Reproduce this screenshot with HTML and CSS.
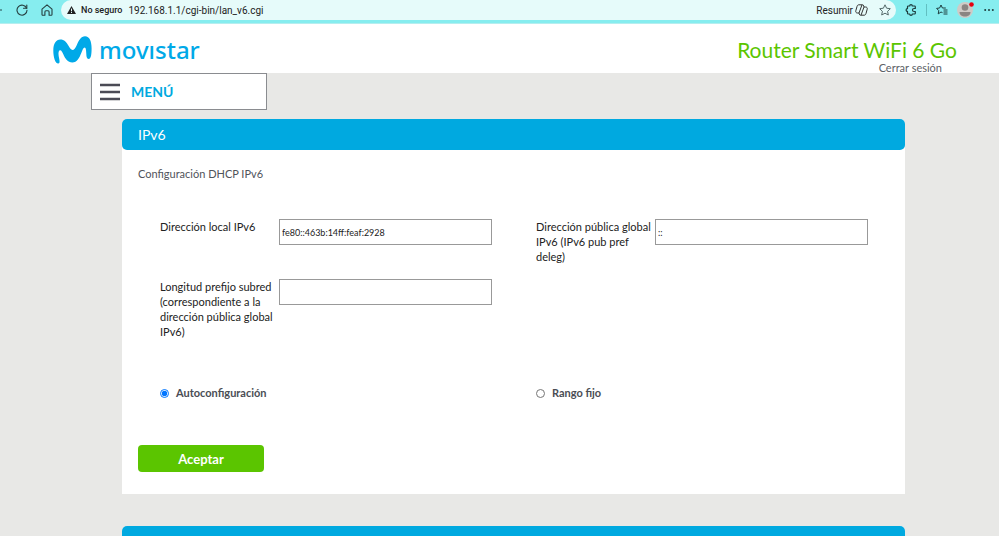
FILE: index.html
```html
<!DOCTYPE html>
<html lang="es">
<head>
  <meta charset="UTF-8">
  <meta name="viewport" content="width=device-width, initial-scale=1.0">
  <title>Router Smart WiFi 6 Go</title>
  <link rel="stylesheet" href="styles.css">
</head>
<body>
  <div class="browser-bar">
    <button class="bar-btn back-btn" aria-label="Atrás">
      <svg width="4" height="12" viewBox="0 0 4 12"><path d="M0 6h2" stroke="#25494a" fill="none"/></svg>
    </button>
    <button class="bar-btn reload-btn" aria-label="Actualizar">
      <svg width="12" height="12" viewBox="0 0 12 12" fill="none" stroke="#263f40" stroke-width="1.1" stroke-linecap="round"><path d="M10.6 4.2A5 5 0 1 0 11 6.2"/><path d="M10.8 1v3.3H7.5"/></svg>
    </button>
    <button class="bar-btn home-btn" aria-label="Inicio">
      <svg width="12" height="12" viewBox="0 0 12 12" fill="none" stroke="#263f40" stroke-width="1.1" stroke-linejoin="round"><path d="M1 5.2 6 .9l5 4.3v5.2c0 .5-.3.8-.8.8H8.100V8c0-.7-.4-1.200-1.100-1.200H5c-.7 0-1.100.5-1.100 1.200v3.200H1.800c-.5 0-.8-.3-.8-.8z"/></svg>
    </button>
    <div class="address">
      <svg width="9" height="8" viewBox="0 0 9 8"><path d="M4.500 0 9 8H0z" fill="#222"/><path d="M4.500 2.600v2.700M4.500 6v1" stroke="#e6fbfa"/></svg>
      <span class="insecure">No seguro</span>
      <span class="url">192.168.1.1/cgi-bin/lan_v6.cgi</span>
      <button class="bar-btn summary-btn">Resumir
        <svg width="13" height="12" viewBox="0 0 13 12" fill="none" stroke="#333" stroke-linejoin="round"><path d="M4 9H2.500C1 9 .5 8 .8 6.800L2 2.500C2.400 1.200 3 .8 4 .8h3.500c.8 0 1 .5 1.200 1.200L9 3"/><path d="M9 3h1.500c1.500 0 2 1 1.700 2.200L11 9.500c-.4 1.300-1 1.700-2 1.700H5.500c-.8 0-1-.5-1.200-1.200L4 9"/><path d="M7 .8 4 9M9 3 6 11.200"/></svg>
      </button>
      <button class="bar-btn" aria-label="Favorito">
        <svg width="12" height="12" viewBox="0 0 12 12" fill="none" stroke="#55696a" stroke-linejoin="round"><path d="m6 .8 1.600 3.400 3.700.5-2.700 2.600.7 3.700L6 9.200 2.700 11l.7-3.700L.7 4.700l3.700-.5z"/></svg>
      </button>
    </div>
    <div class="bar-tools">
      <button class="bar-btn" aria-label="Extensiones">
        <svg width="12" height="12" viewBox="0 0 12 12" fill="none" stroke="#1d3c3d" stroke-width="1.200" stroke-linejoin="round"><path d="M3.300 2h1.400a1.300 1.300 0 0 1 2.600 0h2.200c.5 0 .8.3.8.8v1.700H9a1.500 1.500 0 0 0 0 3h1.300v1.700c0 .5-.3.8-.8.8H7.300a1.300 1.300 0 0 1-2.600 0H3.300c-.5 0-.8-.3-.8-.8V7.400a1.400 1.400 0 0 1 0-2.800V2.800c0-.5.3-.8.8-.8z"/></svg>
      </button>
      <span class="separator"></span>
      <button class="bar-btn" aria-label="Favoritos">
        <svg width="12" height="12" viewBox="0 0 12 12" fill="none" stroke="#1d3c3d" stroke-linejoin="round"><path d="M6.500 8.600 5 8 2.200 9.900l.6-3.200L.6 4.400l3-.4L5 1l1.400 3h3.400"/><path d="M7.500 6h4M7.500 8h4M7.500 10h4"/></svg>
      </button>
      <button class="bar-btn avatar" aria-label="Perfil">
        <svg width="18" height="20" viewBox="0 0 18 20"><circle cx="8" cy="10" r="8" fill="#cfcac6"/><circle cx="8" cy="7.500" r="3.300" fill="#8a8582"/><path d="M2.500 12h11c0 3-2.500 4.500-5.500 4.500S2.500 15 2.500 12z" fill="#8a8582"/><circle cx="14.500" cy="4.500" r="2.300" fill="#e8000f"/></svg>
      </button>
      <button class="bar-btn" aria-label="Más">
        <svg width="10" height="4" viewBox="0 0 10 4" fill="#1d3c3d"><circle cx="1.200" cy="2" r="1"/><circle cx="5" cy="2" r="1"/><circle cx="8.800" cy="2" r="1"/></svg>
      </button>
    </div>
  </div>

  <header class="header">
    <a class="logo" href="#" aria-label="movistar">
      <svg width="39" height="28" viewBox="0 0 39 28"><path d="M5.200 27.600C2.200 27.600.3 21 .3 14.500.3 7.500 3 3.500 7.300 3.500c4 0 6.200 2.600 8.200 6.300 1.500 2.700 2.500 4.100 4 4.100 1.600 0 2.800-1.700 4.200-4.700C25.800 4.500 28 .3 32 .3c4.700 0 6.600 5.500 6.600 12 0 5.500-.5 10.700-2.900 10.700-2 0-2.300-2.600-2.400-5.200-.1-3.300-.4-6.300-1.700-6.300-1.300 0-2 2.300-3.200 5.300-2 5-4.300 9.700-9.100 9.700-4.700 0-7-3.700-9-8.200-1-2.300-1.900-4-3.100-4-1.500 0-1.900 2-1.600 5 .4 3.600 2.200 8.300-.4 8.300z" fill="#00a9e8"/></svg>
      <span class="logo-text">movıstar</span>
    </a>
    <div class="header-right">
      <h1 class="model">Router Smart WiFi 6 Go</h1>
      <a class="logout" href="#">Cerrar sesión</a>
    </div>
  </header>

  <button class="menu-btn">
    <svg width="20" height="18" viewBox="0 0 20 18"><path d="M0 2h20M0 9h20M0 16h20" stroke="#4b4b55" stroke-width="2.500"/></svg>
    MENÚ
  </button>

  <main class="content">
    <section class="panel">
      <h2 class="panel-title">IPv6</h2>
      <form class="panel-body">
        <p class="subtitle">Configuración DHCP IPv6</p>
        <div class="fields">
          <div class="field">
            <label for="local">Dirección local IPv6</label>
            <input type="text" id="local" value="fe80::463b:14ff:feaf:2928">
          </div>
          <div class="field">
            <label for="global">Dirección pública global IPv6 (IPv6 pub pref deleg)</label>
            <input type="text" id="global" value="::">
          </div>
          <div class="field">
            <label for="prefix">Longitud prefijo subred (correspondiente a la dirección pública global IPv6)</label>
            <input type="text" id="prefix">
          </div>
        </div>
        <div class="modes">
          <label class="mode"><input type="radio" name="mode" checked>Autoconfiguración</label>
          <label class="mode"><input type="radio" name="mode">Rango fijo</label>
        </div>
        <button type="button" class="accept-btn">Aceptar</button>
      </form>
    </section>
    <section class="panel">
      <h2 class="panel-title"></h2>
    </section>
  </main>
</body>
</html>
```

FILE: styles.css
```css
* {
  box-sizing: border-box;
}

body {
  margin: 0;
  height: 100vh;
  overflow: hidden;
  background: #e8e8e6;
  font-family: Lato, "Noto Sans", sans-serif;
  font-size: 11px;
  color: #222;
}

button {
  font-family: inherit;
  cursor: pointer;
}

a {
  text-decoration: none;
}

svg {
  display: block;
  flex-shrink: 0;
}

/* browser bar */
.browser-bar {
  display: flex;
  align-items: center;
  height: 24px;
  padding-bottom: 3px;
  background: #86edef;
  border-bottom: 1px solid #b5eeef;
}

.bar-btn {
  display: flex;
  align-items: center;
  padding: 0;
  border: none;
  background: none;
}

.reload-btn {
  margin-left: 12px;
}

.home-btn {
  margin: 0 8px 0 13px;
}

.address {
  display: flex;
  align-items: center;
  flex: 1;
  height: 20px;
  padding: 0 5px 0 6px;
  border-radius: 10px;
  background: #e6fbfa;
  font-family: Roboto, sans-serif;
}

.insecure {
  margin-left: 5px;
  font-size: 9px;
  font-weight: 500;
}

.url {
  margin-left: 6px;
  font-size: 10px;
}

.summary-btn {
  gap: 2px;
  margin: 0 11px 0 auto;
  font-family: Roboto, sans-serif;
  font-size: 10px;
  color: #222;
}

.bar-tools {
  display: flex;
  align-items: center;
  gap: 9px;
  padding: 0 5px 0 9px;
}

.separator {
  width: 1px;
  height: 12px;
  background: #62bfc1;
}

/* header */
.header {
  display: flex;
  justify-content: space-between;
  height: 49px;
  padding: 0 42px 0 53px;
  background: #fff;
}

.logo {
  display: flex;
  align-items: center;
  gap: 7px;
  height: 52px;
  color: #00a9e8;
}

.logo-text {
  font-family: "Noto Sans", sans-serif;
  font-size: 24px;
  font-weight: 500;
  line-height: 28px;
}

.header-right {
  display: flex;
  flex-direction: column;
  align-items: flex-end;
  padding-top: 14px;
}

.model {
  margin: 0;
  font-size: 21px;
  font-weight: 400;
  line-height: 24px;
  color: #5bc500;
}

.logout {
  margin-right: 15px;
  font-size: 11px;
  line-height: 11px;
  color: #5c5f66;
}

/* menu */
.menu-btn {
  display: flex;
  align-items: center;
  gap: 11px;
  width: 176px;
  height: 37px;
  margin-left: 91px;
  padding: 0 8px;
  border: 1px solid #8a8c90;
  background: #fff;
  font-size: 14px;
  font-weight: 700;
  color: #00a9e0;
}

/* panels */
.content {
  display: flex;
  flex-direction: column;
  gap: 32px;
  margin: 9px 94px 0 122px;
}

.panel {
  background: #fff;
  border-radius: 5px 5px 0 0;
}

.panel-title {
  height: 31px;
  margin: 0;
  padding-left: 16px;
  border-radius: 5px;
  background: #00a9e0;
  font-size: 14px;
  font-weight: 400;
  line-height: 31px;
  color: #fff;
}

.panel-body {
  padding: 16px 37px 22px 16px;
}

.subtitle {
  margin: 0;
  font-size: 11px;
  line-height: 16px;
  color: #50535a;
}

.fields,
.modes {
  display: grid;
  grid-template-columns: 1fr 1fr;
  column-gap: 44px;
  padding-left: 22px;
}

.fields {
  row-gap: 15px;
  margin-top: 37px;
}

.field {
  display: flex;
  align-items: flex-start;
}

.field label {
  flex: 0 0 119px;
  padding-right: 2px;
  line-height: 15px;
  color: #222;
}

.field input {
  flex: 1;
  min-width: 0;
  height: 26px;
  padding: 0 2px;
  border: 1px solid #999;
  font-family: inherit;
  font-size: 9px;
  color: #222;
}

.modes {
  margin-top: 46px;
}

.mode {
  display: flex;
  align-items: center;
  gap: 7px;
  font-weight: 700;
  line-height: 16px;
  color: #4a4d54;
}

.mode input {
  width: 9px;
  height: 9px;
  margin: 0;
}

.accept-btn {
  display: block;
  width: 126px;
  height: 27px;
  margin-top: 44px;
  padding: 0;
  border: none;
  border-radius: 4px;
  background: #5bc500;
  font-size: 13px;
  font-weight: 700;
  color: #fff;
}
```
